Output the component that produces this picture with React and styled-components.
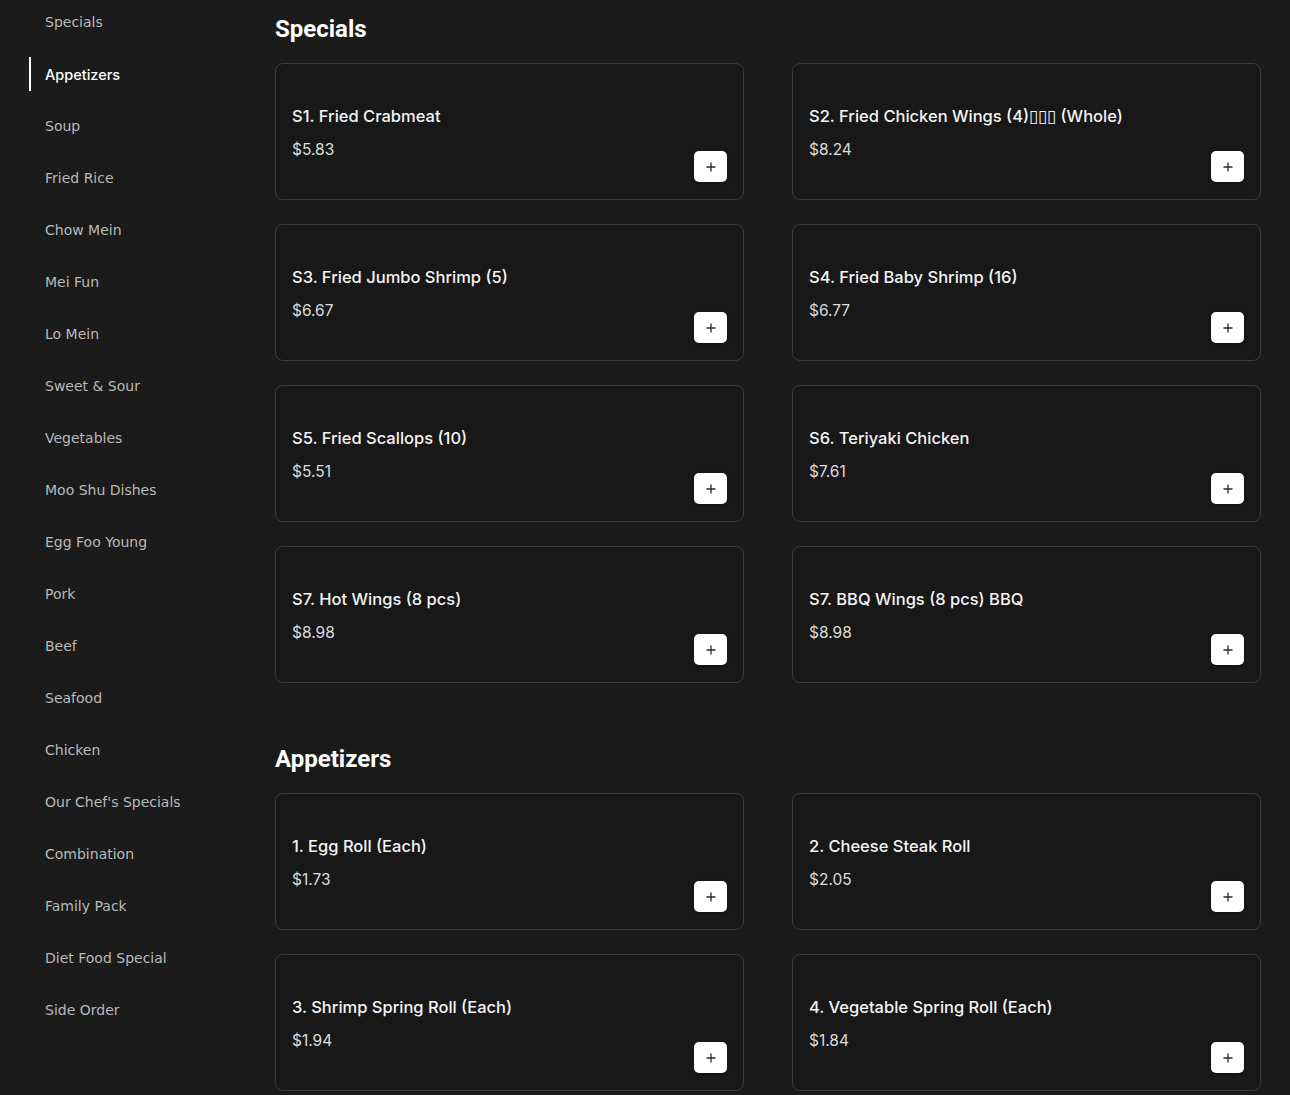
import { styled, createGlobalStyle } from "styled-components";

const GlobalStyle = createGlobalStyle`
   html, body {
      margin: 0;
      padding: 0;
      background-color: #1b1b1b;
   }
   * {
      box-sizing: border-box;
   }
`;

const Page = styled.div`
   display: grid;
   grid-template-columns: 275px 986px;
   min-height: 1095px;
   background-color: #1b1b1b;
`;

const Sidebar = styled.nav`
   display: flex;
   flex-direction: column;
   row-gap: 18px;
   padding: 5px 0 0 29px;
`;

const NavItem = styled.a`
   display: flex;
   align-items: center;
   height: 34px;
   padding-left: 14px;
   border-left: 2px solid ${({ $active }) => ($active ? "#ffffff" : "transparent")};
   font-family: ${({ $active }) => ($active ? "Inter, sans-serif" : "'DejaVu Sans', sans-serif")};
   font-size: ${({ $active }) => ($active ? "14.5px" : "14px")};
   font-weight: ${({ $active }) => ($active ? 500 : 400)};
   color: ${({ $active }) => ($active ? "#ffffff" : "#b9b9b9")};
   cursor: pointer;
`;

const Main = styled.main`
   display: flex;
   flex-direction: column;
   row-gap: 62px;
   padding-top: 15px;
`;

const Section = styled.section`
   display: flex;
   flex-direction: column;
   row-gap: 20px;
`;

const Heading = styled.h2`
   margin: 0;
   height: 28px;
   line-height: 28px;
   font-family: Roboto, sans-serif;
   font-size: 24px;
   font-weight: 700;
   color: #ffffff;
`;

const Grid = styled.div`
   display: grid;
   grid-template-columns: 469px 469px;
   column-gap: 48px;
   row-gap: 24px;
`;

const Card = styled.div`
   display: flex;
   justify-content: space-between;
   align-items: flex-end;
   height: 137px;
   padding: 40px 16px 16px 16px;
   background-color: #181818;
   border: 1px solid #3b3b3b;
   border-radius: 8px;
`;

const Info = styled.div`
   display: flex;
   flex-direction: column;
   row-gap: 10px;
   align-self: flex-start;
`;

const Title = styled.div`
   line-height: 24px;
   font-family: Inter, sans-serif;
   font-size: 16.5px;
   font-weight: 500;
   color: #f4f4f4;
`;

const Price = styled.div`
   line-height: 24px;
   font-family: Inter, sans-serif;
   font-size: 15.5px;
   color: #dcdcdc;
`;

const AddButton = styled.button`
   display: flex;
   justify-content: center;
   align-items: center;
   width: 33px;
   height: 31px;
   margin-bottom: 1px;
   padding: 0;
   background-color: #ffffff;
   border: none;
   border-radius: 5px;
   box-shadow: 0 1px 3px rgba(0, 0, 0, 0.4);
   cursor: pointer;
`;

const PlusIcon = () => (
   <svg width="10" height="10" viewBox="0 0 10 10">
      <path d="M5 0.5v9M0.5 5h9" stroke="#2a2a2a" strokeWidth="1.3" fill="none" />
   </svg>
);

const categories = [
   "Specials", "Appetizers", "Soup", "Fried Rice", "Chow Mein", "Mei Fun", "Lo Mein",
   "Sweet & Sour", "Vegetables", "Moo Shu Dishes", "Egg Foo Young", "Pork", "Beef",
   "Seafood", "Chicken", "Our Chef's Specials", "Combination", "Family Pack",
   "Diet Food Special", "Side Order",
];

const sections = [
   {
      title: "Specials",
      items: [
         { name: "S1. Fried Crabmeat", price: "5.83" },
         { name: "S2. Fried Chicken Wings (4)\u25AF\u25AF\u25AF (Whole)", price: "8.24" },
         { name: "S3. Fried Jumbo Shrimp (5)", price: "6.67" },
         { name: "S4. Fried Baby Shrimp (16)", price: "6.77" },
         { name: "S5. Fried Scallops (10)", price: "5.51" },
         { name: "S6. Teriyaki Chicken", price: "7.61" },
         { name: "S7. Hot Wings (8 pcs)", price: "8.98" },
         { name: "S7. BBQ Wings (8 pcs) BBQ", price: "8.98" },
      ],
   },
   {
      title: "Appetizers",
      items: [
         { name: "1. Egg Roll (Each)", price: "1.73" },
         { name: "2. Cheese Steak Roll", price: "2.05" },
         { name: "3. Shrimp Spring Roll (Each)", price: "1.94" },
         { name: "4. Vegetable Spring Roll (Each)", price: "1.84" },
      ],
   },
];

const MenuCard = ({ name, price }) => (
   <Card>
      <Info>
         <Title>{name}</Title>
         <Price>${price}</Price>
      </Info>
      <AddButton aria-label="Add">
         <PlusIcon />
      </AddButton>
   </Card>
);

export default function App() {
   return (
      <>
         <GlobalStyle />
         <Page>
            <Sidebar>
               {categories.map((c) => (
                  <NavItem key={c} $active={c === "Appetizers"}>{c}</NavItem>
               ))}
            </Sidebar>
            <Main>
               {sections.map((s) => (
                  <Section key={s.title}>
                     <Heading>{s.title}</Heading>
                     <Grid>
                        {s.items.map((it) => (
                           <MenuCard key={it.name} name={it.name} price={it.price} />
                        ))}
                     </Grid>
                  </Section>
               ))}
            </Main>
         </Page>
      </>
   );
}
